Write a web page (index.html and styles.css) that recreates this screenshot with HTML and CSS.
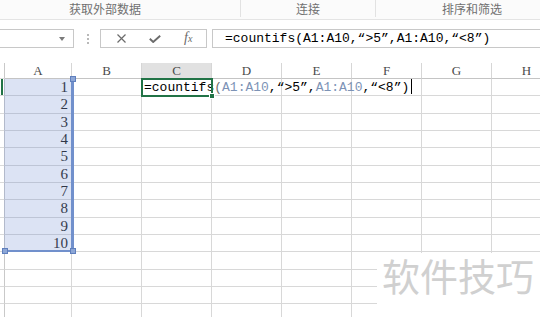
FILE: index.html
```html
<!DOCTYPE html>
<html lang="zh">
<head>
    <meta charset="UTF-8">
    <title>countifs</title>
    <link rel="stylesheet" href="styles.css">
</head>
<body>

<div class="ribbon">
    <div class="group g1">获取外部数据</div>
    <div class="group g2">连接</div>
    <div class="group g3">排序和筛选</div>
</div>

<div class="fbar">
    <div class="namebox"><span class="drop"></span></div>
    <div class="grip"><i></i><i></i><i></i></div>
    <div class="btns">
        <svg class="ico-x" width="9" height="9" viewBox="0 0 9 9"><path d="M0.5 0.5 L8.5 8.5 M8.5 0.5 L0.5 8.5" stroke="#6b6b6b" stroke-width="1.2" fill="none"/></svg>
        <svg class="ico-ok" width="12" height="8" viewBox="0 0 12 8"><path d="M0.8 3.8 L4.2 7 L11.2 0.8" stroke="#6b6b6b" stroke-width="1.9" fill="none"/></svg>
        <span class="fx"><i>f</i><i class="sub">x</i></span>
    </div>
    <div class="finput">=countifs(A1:A10,“>5”,A1:A10,“&lt;8”)</div>
</div>

<div class="sheet">
    <div class="grid">
        <div class="r hr"></div><div class="h">A</div><div class="h">B</div><div class="h sel">C</div><div class="h">D</div><div class="h">E</div><div class="h">F</div><div class="h">G</div><div class="h">H</div>

        <div class="r on"></div><div class="c n">1</div><div class="c"></div><div class="c active"><span class="fn">=countifs</span><span class="paren">(</span><span class="ref">A1:A10</span>,“&gt;5”,<span class="ref">A1:A10</span>,“&lt;8”)<span class="caret"></span></div><div class="c"></div><div class="c"></div><div class="c"></div><div class="c"></div><div class="c"></div>
        <div class="r"></div><div class="c n">2</div><div class="c"></div><div class="c"></div><div class="c"></div><div class="c"></div><div class="c"></div><div class="c"></div><div class="c"></div>
        <div class="r"></div><div class="c n">3</div><div class="c"></div><div class="c"></div><div class="c"></div><div class="c"></div><div class="c"></div><div class="c"></div><div class="c"></div>
        <div class="r"></div><div class="c n">4</div><div class="c"></div><div class="c"></div><div class="c"></div><div class="c"></div><div class="c"></div><div class="c"></div><div class="c"></div>
        <div class="r"></div><div class="c n">5</div><div class="c"></div><div class="c"></div><div class="c"></div><div class="c"></div><div class="c"></div><div class="c"></div><div class="c"></div>
        <div class="r"></div><div class="c n">6</div><div class="c"></div><div class="c"></div><div class="c"></div><div class="c"></div><div class="c"></div><div class="c"></div><div class="c"></div>
        <div class="r"></div><div class="c n">7</div><div class="c"></div><div class="c"></div><div class="c"></div><div class="c"></div><div class="c"></div><div class="c"></div><div class="c"></div>
        <div class="r"></div><div class="c n">8</div><div class="c"></div><div class="c"></div><div class="c"></div><div class="c"></div><div class="c"></div><div class="c"></div><div class="c"></div>
        <div class="r"></div><div class="c n">9</div><div class="c"></div><div class="c"></div><div class="c"></div><div class="c"></div><div class="c"></div><div class="c"></div><div class="c"></div>
        <div class="r"></div><div class="c n">10</div><div class="c"></div><div class="c"></div><div class="c"></div><div class="c"></div><div class="c"></div><div class="c"></div><div class="c"></div>
        <div class="r"></div><div class="c"></div><div class="c"></div><div class="c"></div><div class="c"></div><div class="c"></div><div class="c"></div><div class="c"></div><div class="c"></div>
        <div class="r"></div><div class="c"></div><div class="c"></div><div class="c"></div><div class="c"></div><div class="c"></div><div class="c"></div><div class="c"></div><div class="c"></div>
        <div class="r"></div><div class="c"></div><div class="c"></div><div class="c"></div><div class="c"></div><div class="c"></div><div class="c"></div><div class="c"></div><div class="c"></div>
        <div class="r"></div><div class="c"></div><div class="c"></div><div class="c"></div><div class="c"></div><div class="c"></div><div class="c"></div><div class="c"></div><div class="c"></div>
    </div>

    <!-- range picked up by the formula -->
    <div class="range">
        <span class="knob kbl"></span>
        <span class="knob kbr"></span>
        <span class="knob ktr"></span>
    </div>
</div>

<div class="mark">软件技巧</div>

</body>
</html>
```

FILE: styles.css
```css
body {
    margin: 0;
    width: 540px;
    height: 317px;
    overflow: hidden;
    position: relative;
    background: #fff;
    font-family: "Liberation Sans", sans-serif;
}

/* ribbon group captions */
.ribbon {
    display: flex;
    height: 19px;
    border-bottom: 1px solid #e4e4e4;
    background: #fbfbfb;
    overflow: hidden;
}

.group {
    height: 16px;
    padding-top: 1px;
    font: 12px/16px "Noto Sans CJK SC", sans-serif;
    color: #707070;
    text-align: center;
    border-right: 1px solid #e2e2e2;
    flex-shrink: 0;
}

.g1 {
    margin-left: -30px;
    width: 270px;
}

.g2 {
    width: 134px;
}

.g3 {
    width: 192px;
    border-right: none;
}

/* formula bar */
.fbar {
    display: flex;
    align-items: center;
    height: 19px;
    margin-top: 9px;
    overflow: hidden;
}

.namebox {
    margin-left: -10px;
    width: 82px;
    height: 17px;
    border: 1px solid #c8c8c8;
    display: flex;
    align-items: center;
    justify-content: flex-end;
    flex-shrink: 0;
}

.drop {
    width: 0;
    height: 0;
    margin-right: 8px;
    margin-top: 1px;
    border-left: 3px solid transparent;
    border-right: 3px solid transparent;
    border-top: 4px solid #7a7a7a;
}

.grip {
    margin-left: 13px;
    width: 2px;
    display: flex;
    flex-direction: column;
    gap: 2px;
    flex-shrink: 0;
}

.grip i {
    width: 2px;
    height: 2px;
    background: #b9b9b9;
}

.btns {
    margin-left: 11px;
    width: 105px;
    height: 17px;
    border: 1px solid #c8c8c8;
    display: flex;
    align-items: center;
    flex-shrink: 0;
}

.ico-x {
    margin-left: 16px;
}

.ico-ok {
    margin-left: 23px;
}

.fx {
    margin-left: 23px;
    font-family: "Liberation Serif", serif;
    font-style: italic;
    color: #6b6b6b;
    font-size: 14px;
    line-height: 14px;
}

.fx i {
    font-style: italic;
}

.fx .sub {
    font-size: 10px;
}

.finput {
    flex: 1;
    margin-left: 5px;
    height: 17px;
    border: 1px solid #c8c8c8;
    border-right: none;
    padding-left: 12px;
    font: 13px/17px "Liberation Mono", monospace;
    color: #000;
    white-space: nowrap;
}

/* worksheet */
.sheet {
    position: relative;
    margin-top: 15px;
    overflow: hidden;
    height: 254px;
}

.grid {
    display: grid;
    grid-template-columns: 5px 67px repeat(7, 70px);
    grid-template-rows: 16px;
    grid-auto-rows: 17.33px;
}

.grid > div {
    box-sizing: border-box;
    min-width: 0;
}

.r {
    border-right: 1px solid #c9c9c9;
    border-bottom: 1px solid #dadada;
}

.r.on {
    box-shadow: inset 1px 0 #fff, inset 3px 0 #217346;
}

.h {
    border-right: 1px solid #d6d6d6;
    border-bottom: 1px solid #c4c4c4;
    font: 13px/15px "Liberation Serif", serif;
    color: #4a4a4a;
    text-align: center;
}

.h.sel {
    background: #e1e1e1;
}

.c {
    border-right: 1px solid #d8d8d8;
    border-bottom: 1px solid #d8d8d8;
    white-space: nowrap;
}

.n {
    text-align: right;
    padding-right: 3px;
    font: 15px/17px "Liberation Serif", serif;
    color: #1e1e1e;
}

.active {
    position: relative;
    outline: 2px solid #217346;
    outline-offset: -1px;
    padding-left: 2px;
    font: 13px/16px "Liberation Mono", monospace;
    color: #000;
}

.active::after {
    content: "";
    position: absolute;
    right: -4px;
    bottom: -4px;
    width: 4px;
    height: 4px;
    background: #217346;
    border: 1px solid #fff;
}

.fn {
    color: #000;
}

.paren {
    color: #6e6e6e;
}

.ref {
    color: #7d93b6;
}

.caret {
    display: inline-block;
    width: 1px;
    height: 15px;
    margin-left: 2px;
    background: #000;
    vertical-align: -3px;
}

.range {
    position: absolute;
    left: 4px;
    top: 16px;
    width: 67px;
    height: 171px;
    background: rgba(110, 140, 210, 0.24);
    border-right: 3px solid #7190cc;
    border-bottom: 2px solid #7190cc;
}

.knob {
    position: absolute;
    width: 4px;
    height: 4px;
    background: #8ca6d6;
    border: 1px solid #5f7fbd;
}

.kbl {
    left: -2px;
    bottom: -4px;
}

.kbr {
    right: -5px;
    bottom: -4px;
}

.ktr {
    right: -5px;
    top: -3px;
}

/* watermark */
.mark {
    position: absolute;
    left: 377px;
    top: 253px;
    width: 158px;
    height: 64px;
    padding-left: 5px;
    padding-top: 3px;
    background: #fff;
    font: 38px/38px "Noto Sans CJK SC", sans-serif;
    color: #d0d0d0;
    white-space: nowrap;
}
```
